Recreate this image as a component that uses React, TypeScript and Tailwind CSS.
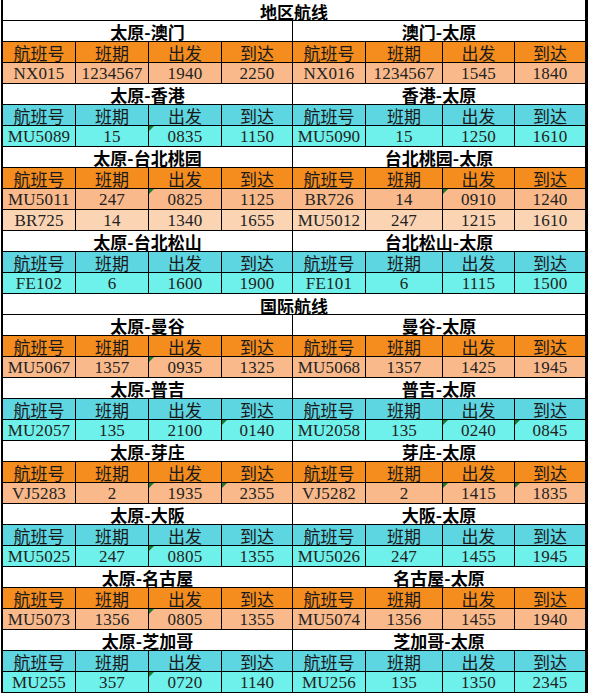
import React from 'react';

type Row = { cells: string[]; marks?: number[] };

interface Route {
  left: string;
  right: string;
  tone: 'orange' | 'cyan';
  leftRows: Row[];
  rightRows: Row[];
}

interface Section {
  title: string;
  routes: Route[];
}

const sections: Section[] = [
  {
    title: '地区航线',
    routes: [
      {
        left: '太原-澳门',
        right: '澳门-太原',
        tone: 'orange',
        leftRows: [{ cells: ['NX015', '1234567', '1940', '2250'] }],
        rightRows: [{ cells: ['NX016', '1234567', '1545', '1840'] }],
      },
      {
        left: '太原-香港',
        right: '香港-太原',
        tone: 'cyan',
        leftRows: [{ cells: ['MU5089', '15', '0835', '1150'], marks: [2] }],
        rightRows: [{ cells: ['MU5090', '15', '1250', '1610'] }],
      },
      {
        left: '太原-台北桃园',
        right: '台北桃园-太原',
        tone: 'orange',
        leftRows: [
          { cells: ['MU5011', '247', '0825', '1125'], marks: [2] },
          { cells: ['BR725', '14', '1340', '1655'] },
        ],
        rightRows: [
          { cells: ['BR726', '14', '0910', '1240'], marks: [2] },
          { cells: ['MU5012', '247', '1215', '1610'] },
        ],
      },
      {
        left: '太原-台北松山',
        right: '台北松山-太原',
        tone: 'cyan',
        leftRows: [{ cells: ['FE102', '6', '1600', '1900'] }],
        rightRows: [{ cells: ['FE101', '6', '1115', '1500'] }],
      },
    ],
  },
  {
    title: '国际航线',
    routes: [
      {
        left: '太原-曼谷',
        right: '曼谷-太原',
        tone: 'orange',
        leftRows: [{ cells: ['MU5067', '1357', '0935', '1325'], marks: [2] }],
        rightRows: [{ cells: ['MU5068', '1357', '1425', '1945'] }],
      },
      {
        left: '太原-普吉',
        right: '普吉-太原',
        tone: 'cyan',
        leftRows: [{ cells: ['MU2057', '135', '2100', '0140'], marks: [3] }],
        rightRows: [{ cells: ['MU2058', '135', '0240', '0845'], marks: [2, 3] }],
      },
      {
        left: '太原-芽庄',
        right: '芽庄-太原',
        tone: 'orange',
        leftRows: [{ cells: ['VJ5283', '2', '1935', '2355'], marks: [2, 3] }],
        rightRows: [{ cells: ['VJ5282', '2', '1415', '1835'], marks: [2, 3] }],
      },
      {
        left: '太原-大阪',
        right: '大阪-太原',
        tone: 'cyan',
        leftRows: [{ cells: ['MU5025', '247', '0805', '1355'], marks: [2] }],
        rightRows: [{ cells: ['MU5026', '247', '1455', '1945'] }],
      },
      {
        left: '太原-名古屋',
        right: '名古屋-太原',
        tone: 'orange',
        leftRows: [{ cells: ['MU5073', '1356', '0805', '1355'], marks: [2] }],
        rightRows: [{ cells: ['MU5074', '1356', '1455', '1940'] }],
      },
      {
        left: '太原-芝加哥',
        right: '芝加哥-太原',
        tone: 'cyan',
        leftRows: [{ cells: ['MU255', '357', '0720', '1140'], marks: [2] }],
        rightRows: [{ cells: ['MU256', '135', '1350', '2345'] }],
      },
    ],
  },
];

const headers = ['航班号', '班期', '出发', '到达'];

const cjk = "font-['Noto_Sans_CJK_SC',sans-serif]";
const num = "font-['Liberation_Serif','Noto_Sans_CJK_SC',serif]";

// Excel style fill per row
const headerBg = { orange: 'bg-[#f48c1e]', cyan: 'bg-[#5ed6e2]' };
const dataBg = {
  orange: ['bg-[#f9b98a]', 'bg-[#fbd4b3]'],
  cyan: ['bg-[#6ef1ea]', 'bg-[#6ef1ea]'],
};

const Marker = () => (
  <span className="absolute left-0 top-0 w-0 h-0 border-t-[5px] border-r-[5px] border-t-[#1c7a2c] border-r-transparent" />
);

const Cell: React.FC<{ text: string; bg: string; mark?: boolean; last?: boolean; header?: boolean }> = ({
  text,
  bg,
  mark,
  last,
  header,
}) => (
  <div
    className={`relative h-[21px] flex items-center justify-center border-b border-black ${last ? '' : 'border-r'} ${bg} ${
      header ? `${cjk} text-[17px] text-[#1a1a1a]` : `${num} text-[17px] tracking-[0.2px] text-[#222]`
    } leading-none`}
  >
    {mark && <Marker />}
    {text}
  </div>
);

const titleCls = `h-[21px] flex items-center justify-center border-b border-black bg-white ${cjk} font-bold text-[17px] leading-none text-black`;

const App: React.FC = () => {
  return (
    <div className="w-[589px] h-[695px] bg-white overflow-hidden">
      <div className="ml-[1px] w-[587px] border-l-2 border-r-[3px] border-black">
        <div className="grid grid-cols-[73px_73px_73px_71px_73px_77px_72px_70px]">
          {sections.map((section) => (
            <React.Fragment key={section.title}>
              <div className={`col-span-8 pt-[2px] ${titleCls}`}>{section.title}</div>
              {section.routes.map((route) => {
                const rowCount = Math.max(route.leftRows.length, route.rightRows.length);
                return (
                  <React.Fragment key={route.left}>
                    <div className={`col-span-4 border-r ${titleCls}`}>{route.left}</div>
                    <div className={`col-span-4 ${titleCls}`}>{route.right}</div>
                    {[...headers, ...headers].map((h, i) => (
                      <Cell key={`h-${i}`} text={h} bg={headerBg[route.tone]} header last={i === 7} />
                    ))}
                    {Array.from({ length: rowCount }).map((_, r) => {
                      const bg = dataBg[route.tone][r];
                      const l = route.leftRows[r];
                      const rr = route.rightRows[r];
                      return (
                        <React.Fragment key={`r-${r}`}>
                          {l.cells.map((c, i) => (
                            <Cell key={`l-${i}`} text={c} bg={bg} mark={l.marks?.includes(i)} />
                          ))}
                          {rr.cells.map((c, i) => (
                            <Cell key={`rr-${i}`} text={c} bg={bg} mark={rr.marks?.includes(i)} last={i === 3} />
                          ))}
                        </React.Fragment>
                      );
                    })}
                  </React.Fragment>
                );
              })}
            </React.Fragment>
          ))}
        </div>
      </div>
    </div>
  );
};

export default App;
